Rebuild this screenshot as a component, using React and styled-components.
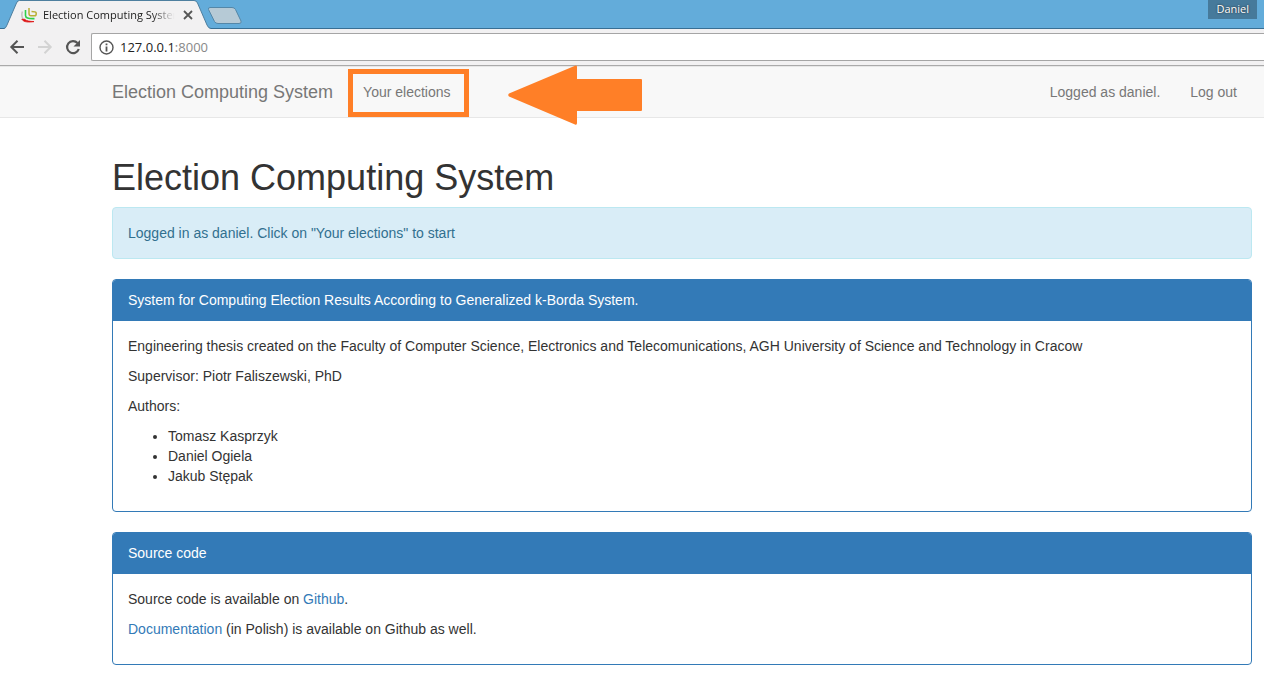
import React from 'react';
import styled, { createGlobalStyle } from 'styled-components';

const GlobalStyle = createGlobalStyle`
  *, *::before, *::after { box-sizing: border-box; }
  body {
    margin: 0;
    overflow-x: hidden;
    background: #fff;
    color: #333;
    font: 14px/20px "Liberation Sans", Arial, sans-serif;
  }
  button, input { font: inherit; }
`;

const TabStrip = styled.header`
  display: flex;
  align-items: flex-start;
  height: 29px;
  padding-left: 4px;
  border-bottom: 1px solid #386f94;
  background: #63acda;
  font-family: "Open Sans", "Segoe UI", sans-serif;
`;

const Tab = styled.div`
  position: relative;
  display: flex;
  align-items: center;
  width: 207px;
  height: 29px;
  padding: 0 17px;
  font-size: 11px;
  line-height: 18px;
  color: #222;
`;

const TabShape = styled.svg`
  position: absolute;
  inset: 0;
`;

const Favicon = styled.svg`
  position: relative;
  flex: none;
`;

const TabTitle = styled.span`
  position: relative;
  flex: none;
  width: 133px;
  margin: 0 7px 0 6px;
  overflow: hidden;
  white-space: nowrap;
  mask-image: linear-gradient(to right, #000 82%, transparent 99%);
`;

const IconButton = styled.button`
  position: relative;
  display: flex;
  align-items: center;
  justify-content: center;
  flex: none;
  width: ${({ $size }) => $size}px;
  height: ${({ $size }) => $size}px;
  padding: 0;
  border: 0;
  background: none;
  color: ${({ disabled }) => (disabled ? '#d3d3d3' : '#555')};
`;

const NewTab = styled.button`
  margin: 6px 0 0 -4px;
  padding: 0;
  border: 0;
  background: none;
  line-height: 0;
`;

const Profile = styled.button`
  height: 19px;
  margin-left: auto;
  margin-right: 7px;
  padding: 0 8px 2px;
  border: 0;
  background: #467a9b;
  color: #fff;
  font-size: 11px;
  font-weight: 500;
  line-height: 17px;
  text-shadow: 0 0 2px #222;
`;

const Toolbar = styled.div`
  display: flex;
  align-items: center;
  gap: 8px;
  padding: 4px 0 4px 7px;
  border-bottom: 1px solid #aaa;
  background: #f2f1f2;
`;

const AddressBox = styled.div`
  display: flex;
  align-items: center;
  flex: 1;
  height: 28px;
  padding-left: 7px;
  border: 1px solid #a5a5a5;
  border-right: 0;
  border-radius: 2px 0 0 2px;
  background: #fff;
`;

const Address = styled.div`
  flex: 1;
  margin-left: 6px;
  color: #888;
  font: 13px/20px "Open Sans", "Segoe UI", sans-serif;
  strong { font-weight: 400; color: #222; }
`;

const Navbar = styled.nav`
  display: flex;
  padding: 0 12px 0 97px;
  border: solid #e7e7e7;
  border-width: 1px 0;
  background: #f8f8f8;
`;

const NavItem = styled.div`
  position: relative;
  margin-left: ${({ $end }) => ($end ? 'auto' : '0')};
`;

const NavLink = styled.a`
  display: block;
  padding: 15px;
  color: #777;
  font-size: ${({ $brand }) => ($brand ? 18 : 14)}px;
  line-height: 20px;
  text-decoration: none;
  white-space: nowrap;
`;

const NavText = styled.p`
  margin: 0;
  padding: 15px;
  color: #777;
`;

const Highlight = styled.span`
  position: absolute;
  inset: 2px -3px 0 0;
  border: 5px solid #ff7f27;
  pointer-events: none;
`;

const Arrow = styled.svg`
  position: absolute;
  top: -2px;
  left: 160px;
`;

const Container = styled.main`
  padding: 20px 12px 0 112px;
`;

const Title = styled.h1`
  margin: 20px 0 10px;
  font-size: 36px;
  font-weight: 400;
  line-height: 39px;
`;

const Alert = styled.div`
  margin-bottom: 20px;
  padding: 15px;
  border: 1px solid #bce8f1;
  border-radius: 4px;
  background: #d9edf7;
  color: #31708f;
`;

const Panel = styled.section`
  margin-bottom: 20px;
  border: 1px solid #337ab7;
  border-radius: 4px;
  overflow: hidden;
`;

const PanelHeading = styled.h2`
  margin: 0;
  padding: 10px 15px 11px;
  background: #337ab7;
  color: #fff;
  font-size: 14px;
  font-weight: 400;
  line-height: 20px;
`;

const PanelBody = styled.div`
  padding: 15px;
  p { margin: 0 0 10px; }
  ul { margin: 0 0 10px; padding-left: 40px; }
  a { color: #337ab7; text-decoration: none; }
`;

const authors = ['Tomasz Kasprzyk', 'Daniel Ogiela', 'Jakub Stępak'];

function BrowserChrome() {
  return (
    <>
      <TabStrip>
        <Tab>
          <TabShape width="207" height="29" viewBox="0 0 207 29" aria-hidden="true">
            <path d="M0 29Q2 28 3 25L12.500 3Q13.500 .5 15.500 .5H190Q192.500 .5 193.500 3L203 25Q204 28 207 29Z" fill="#f2f1f2" />
            <path d="M0 28.500Q2 28 3 25L12.500 3Q13.500 .5 15.500 .5H190Q192.500 .5 193.500 3L203 25Q204 28 207 28.500" fill="none" stroke="#4e7f9f" />
          </TabShape>
          <Favicon width="16" height="16" viewBox="0 0 16 16" fill="none" aria-hidden="true">
            <path d="M1.500 4.500C.5 7 .5 9.500 2 12" stroke="#c9c4c4" strokeWidth="1.600" />
            <path d="M.8 12.300C3 15.500 8 15.300 13 14.600C9 14.300 6 14.300 3.500 12.300Z" fill="#d11" stroke="#d11" strokeWidth=".8" />
            <path d="M4.500 3V8.500C4.500 11 7 11.800 13.500 11.600" stroke="#2fd04a" strokeWidth="1.600" />
            <path d="M8 1V6.500Q8 8.800 10 8.800H13.500Q15.200 8.800 15.200 7V6Q14.800 4.600 10.500 4.600" stroke="#b9ae35" strokeWidth="1.500" />
          </Favicon>
          <TabTitle>Election Computing System</TabTitle>
          <IconButton $size={10} aria-label="Close tab">
            <svg width="10" height="10" viewBox="0 0 10 10" fill="none" stroke="currentColor" strokeWidth="1.800">
              <path d="M1 1L9 9M9 1L1 9" />
            </svg>
          </IconButton>
        </Tab>
        <NewTab aria-label="New tab">
          <svg width="36" height="19" viewBox="0 0 36 19">
            <path d="M3 1.500H25Q27.500 1.500 28.500 3.500L34 15Q35 17.500 32 17.500H11Q8.500 17.500 7.500 15.500L1.500 3.500Q1 1.500 3 1.500Z" fill="#b6cad6" stroke="#5487a8" />
          </svg>
        </NewTab>
        <Profile>Daniel</Profile>
      </TabStrip>
      <Toolbar>
        <IconButton $size={20} aria-label="Back">
          <svg width="16" height="16" viewBox="0 0 16 16" fill="none" stroke="currentColor" strokeWidth="2">
            <path d="M15 8H2.500M8.500 1.800L2.300 8L8.500 14.200" />
          </svg>
        </IconButton>
        <IconButton $size={20} aria-label="Forward" disabled>
          <svg width="16" height="16" viewBox="0 0 16 16" fill="none" stroke="currentColor" strokeWidth="2">
            <path d="M1 8H13.500M7.500 1.800L13.700 8L7.500 14.200" />
          </svg>
        </IconButton>
        <IconButton $size={20} aria-label="Reload">
          <svg width="16" height="16" viewBox="0 0 16 16">
            <path d="M12.500 4A6 6 0 1 0 13.800 10" fill="none" stroke="currentColor" strokeWidth="2.200" />
            <path d="M15 1V7.500H8.500Z" fill="currentColor" />
          </svg>
        </IconButton>
        <AddressBox>
          <svg width="15" height="15" viewBox="0 0 15 15" fill="none" stroke="#555" aria-hidden="true">
            <circle cx="7.500" cy="7.500" r="6.500" strokeWidth="1.400" />
            <path d="M7.500 6.500V11.500M7.500 3.500V5.200" strokeWidth="1.800" />
          </svg>
          <Address><strong>127.0.0.1</strong>:8000</Address>
        </AddressBox>
      </Toolbar>
    </>
  );
}

export default function App() {
  return (
    <>
      <GlobalStyle />
      <BrowserChrome />
      <Navbar>
        <NavLink href="#home" $brand>Election Computing System</NavLink>
        <NavItem>
          <NavLink href="#elections">Your elections</NavLink>
          <Highlight />
          <Arrow width="135" height="61" viewBox="0 0 135 61" aria-hidden="true">
            <path d="M1 28.500L67 .8Q69 0 69 2V14H133Q134 14 134 15V45Q134 46 133 46H69V58Q69 60.500 67 59.500L1 31.500Q-.5 30 1 28.500Z" fill="#ff7f27" />
          </Arrow>
        </NavItem>
        <NavItem $end>
          <NavText>Logged as daniel.</NavText>
        </NavItem>
        <NavLink href="#logout">Log out</NavLink>
      </Navbar>
      <Container>
        <Title>Election Computing System</Title>
        <Alert role="status">Logged in as daniel. Click on "Your elections" to start</Alert>
        <Panel>
          <PanelHeading>System for Computing Election Results According to Generalized k-Borda System.</PanelHeading>
          <PanelBody>
            <p>Engineering thesis created on the Faculty of Computer Science, Electronics and Telecomunications, AGH University of Science and Technology in Cracow</p>
            <p>Supervisor: Piotr Faliszewski, PhD</p>
            <p>Authors:</p>
            <ul>
              {authors.map((name) => <li key={name}>{name}</li>)}
            </ul>
          </PanelBody>
        </Panel>
        <Panel>
          <PanelHeading>Source code</PanelHeading>
          <PanelBody>
            <p>Source code is available on <a href="#github">Github</a>.</p>
            <p><a href="#documentation">Documentation</a> (in Polish) is available on Github as well.</p>
          </PanelBody>
        </Panel>
      </Container>
    </>
  );
}
